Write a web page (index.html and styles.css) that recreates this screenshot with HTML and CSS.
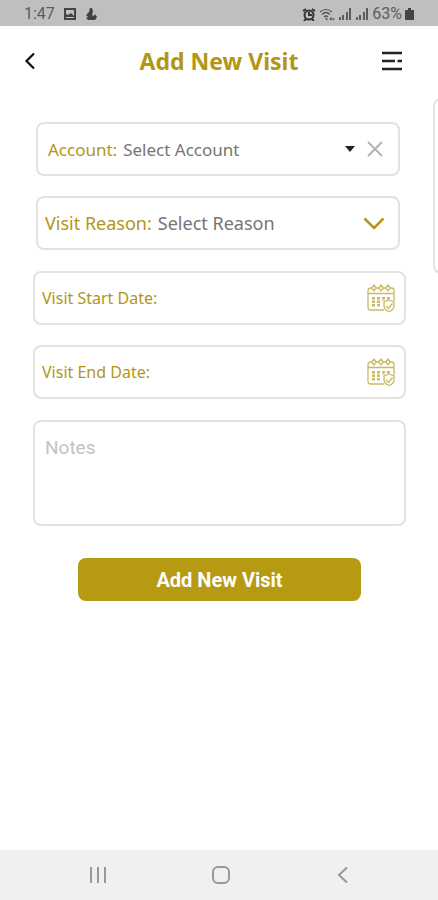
FILE: index.html
```html
<!DOCTYPE html>
<html lang="en">
<head>
<meta charset="utf-8">
<meta name="viewport" content="width=device-width, initial-scale=1">
<title>Add New Visit</title>
<link rel="stylesheet" href="styles.css">
</head>
<body>
<svg class="defs" aria-hidden="true">
  <symbol id="calendar" viewBox="0 0 28 28">
    <g fill="none" stroke="currentColor" stroke-width="1.300">
      <path d="M17 26H3.500a2.500 2.500 0 0 1-2.500-2.500V6.500A2.500 2.500 0 0 1 3.500 4H5M9 4h3M16 4h3M23 4h1.500A2.500 2.500 0 0 1 27 6.500V17M1 9.500h26"/>
      <path d="M7 1 9.200 4 7 7 4.800 4zM14 1l2.200 3L14 7l-2.200-3zM21 1l2.200 3L21 7l-2.200-3z"/>
      <path d="M22 16l5 2v3.500c0 3-2 5-5 6-3-1-5-3-5-6V18zM19 22l2.500 2.500 4-5"/>
    </g>
    <path fill="none" stroke="currentColor" stroke-width="3" stroke-dasharray="2.500 1" d="M6.500 13v10.500M11.500 13v10.500M16.500 13v4M21.500 13v2.500"/>
  </symbol>
  <symbol id="signal" viewBox="0 0 14 12">
    <path fill="none" stroke="currentColor" stroke-width="2" d="M2 9v3M5 7v5M9 4v8M12 0v12"/>
  </symbol>
</svg>

<div class="screen">
  <div class="status">
    <div class="status-group">
      <span>1:47</span>
      <svg width="14" height="12" viewBox="0 0 14 12"><path fill="#444" fill-rule="evenodd" d="M1 0h12v12H1zM3 2v4l2 1 3-2 3 3V2zM3 9h8v1H3z"/></svg>
      <svg width="12" height="12" viewBox="0 0 12 12"><path fill="#444" d="M5 0h2l1 3-1 4 2 1 1-2 2 3-2 3H3L1 10l2-1L1 7l3-3z"/></svg>
    </div>
    <div class="status-group status-right">
      <svg width="14" height="13" viewBox="0 0 14 13"><g fill="none" stroke="#333" stroke-width="2"><circle cx="7" cy="7" r="4.500"/><path d="M1 3l3-2M13 3l-3-2M2 13l2-2M12 13l-2-2M7 4v3h3"/></g></svg>
      <svg class="wifi" width="16" height="13" viewBox="0 0 16 13"><g fill="none" stroke="#555" stroke-width="1.200"><path d="M1 4q6-5 12 0M3 6.500q4-4 8 0M5 9q2-2 4 0M6.500 10l2 2M11 12l1-2 1 2M14 10l1 2"/></g></svg>
      <svg width="14" height="12"><use href="#signal"/></svg>
      <svg width="14" height="12"><use href="#signal"/></svg>
      <span>63%</span>
      <svg width="9" height="12" viewBox="0 0 9 12"><path fill="#444" d="M3 0h3v2h3v10H0V2h3z"/></svg>
    </div>
  </div>

  <header class="header">
    <button class="icon-button" type="button" aria-label="Back">
      <svg width="12" height="18" viewBox="0 0 12 18"><path fill="none" stroke="#111" stroke-width="2.200" d="M10 1.500 2.500 9l7.500 7.500"/></svg>
    </button>
    <h1 class="title">Add New Visit</h1>
    <button class="icon-button menu" type="button" aria-label="Menu">
      <svg width="22" height="20" viewBox="0 0 22 20"><path fill="none" stroke="#222" stroke-width="2.500" d="M1 2h20M1 10h13M16.500 10H21M1 18h20"/></svg>
    </button>
  </header>

  <form class="form">
    <div class="group group-inset">
      <div class="field field-account">
        <label for="account">Account:</label>
        <select id="account"><option>Select Account</option></select>
        <svg class="caret" width="10" height="6" viewBox="0 0 10 6"><path fill="#222" d="M0 0h10L5 6z"/></svg>
        <button class="icon-button" type="button" aria-label="Clear account">
          <svg width="16" height="16" viewBox="0 0 16 16"><path fill="none" stroke="#b0b0b0" stroke-width="1.800" d="M1 1l14 14M15 1 1 15"/></svg>
        </button>
      </div>
      <div class="field field-reason">
        <label for="reason">Visit Reason:</label>
        <select id="reason"><option>Select Reason</option></select>
        <svg class="chevron" width="22" height="13" viewBox="0 0 22 13"><path fill="none" stroke="#b39615" stroke-width="2.500" d="M1.500 1.500 11 11l9.500-9.500"/></svg>
      </div>
    </div>
    <div class="group">
      <div class="field field-date">
        <label for="start">Visit Start Date:</label>
        <input id="start" type="text">
        <svg class="calendar" width="28" height="28"><use href="#calendar"/></svg>
      </div>
      <div class="field field-date">
        <label for="end">Visit End Date:</label>
        <input id="end" type="text">
        <svg class="calendar" width="28" height="28"><use href="#calendar"/></svg>
      </div>
    </div>
    <textarea class="notes" aria-label="Notes" placeholder="Notes"></textarea>
    <button class="submit" type="button">Add New Visit</button>
  </form>
  <div class="side-panel"></div>

  <nav class="navbar">
    <button class="icon-button" type="button" aria-label="Recent apps">
      <svg width="18" height="18" viewBox="0 0 18 18"><path fill="none" stroke="#999" stroke-width="2" d="M2 1v16M9 1v16M16 1v16"/></svg>
    </button>
    <button class="icon-button" type="button" aria-label="Home">
      <svg width="18" height="18" viewBox="0 0 18 18"><rect x="1" y="1" width="16" height="16" rx="5" fill="none" stroke="#999" stroke-width="2"/></svg>
    </button>
    <button class="icon-button" type="button" aria-label="Back">
      <svg width="18" height="18" viewBox="0 0 18 18"><path fill="none" stroke="#999" stroke-width="2" d="M13 1.500 5 9l8 7.500"/></svg>
    </button>
  </nav>
</div>
</body>
</html>
```
FILE: styles.css
```css
* {
  box-sizing: border-box;
}

body {
  margin: 0;
  background: #fff;
  font-family: "Noto Sans", sans-serif;
}

.defs {
  position: absolute;
  width: 0;
  height: 0;
}

.screen {
  position: relative;
  display: flex;
  flex-direction: column;
  min-height: 100vh;
  overflow: hidden;
}

.status {
  display: flex;
  justify-content: space-between;
  align-items: center;
  height: 26px;
  padding: 2px 24px 0;
  background: #bfbfbf;
  color: #5c5c5c;
  font: 16px/24px Roboto, sans-serif;
}

.status-group {
  display: flex;
  align-items: center;
  gap: 8px;
}

.status-right {
  gap: 3px;
}

.header {
  display: grid;
  grid-template-columns: 1fr auto 1fr;
  align-items: center;
  height: 70px;
  padding: 0 24px;
}

.title {
  margin: 0;
  color: #b39615;
  font-size: 23px;
  font-weight: 700;
  line-height: 32px;
}

.icon-button {
  display: flex;
  padding: 0;
  border: 0;
  background: none;
}

.menu {
  justify-self: end;
  margin-right: 11px;
}

.form {
  display: flex;
  flex-direction: column;
  flex: 1;
  gap: 21px;
  padding: 26px 32px 32px 33px;
}

.group {
  display: flex;
  flex-direction: column;
  gap: 20px;
}

.group-inset {
  margin: 0 6px 0 3px;
}

.field,
.notes {
  border: 2px solid #e2e2e2;
  border-radius: 8px;
  background: #fff;
}

.field {
  display: flex;
  align-items: center;
  height: 54px;
  font-size: 18px;
}

.field label {
  color: #b39615;
}

.field select,
.field input {
  flex: 1;
  min-width: 0;
  height: 32px;
  margin: 0 0 0 6px;
  padding: 0;
  border: 0;
  outline: 0;
  appearance: none;
  background: none;
  color: #757575;
  font: inherit;
}

.field-account {
  padding: 0 15px 0 10px;
  font-size: 17px;
}

.caret {
  margin-right: 12px;
}

.field-reason {
  padding: 0 13px 0 7px;
}

.field-date {
  padding: 0 9px 0 7px;
  font-size: 16px;
}

.calendar {
  color: #cbb964;
}

.notes {
  display: block;
  width: 100%;
  height: 106px;
  padding: 12px 10px;
  outline: 0;
  resize: none;
  color: #757575;
  font: 19px/28px Roboto, sans-serif;
}

.notes::placeholder {
  color: #c2c2c2;
}

.submit {
  align-self: center;
  width: 76%;
  height: 43px;
  margin-top: 11px;
  border: 0;
  border-radius: 8px;
  background: #b59a12;
  color: #fff;
  font: 700 20px/28px Roboto, sans-serif;
}

.side-panel {
  position: absolute;
  top: 98px;
  right: -32px;
  width: 37px;
  height: 176px;
  border: 2px solid #e2e2e2;
  border-radius: 8px;
}

.navbar {
  display: flex;
  justify-content: space-between;
  align-items: center;
  height: 50px;
  padding: 0 86px 0 89px;
  background: #f0f0f0;
}
```
